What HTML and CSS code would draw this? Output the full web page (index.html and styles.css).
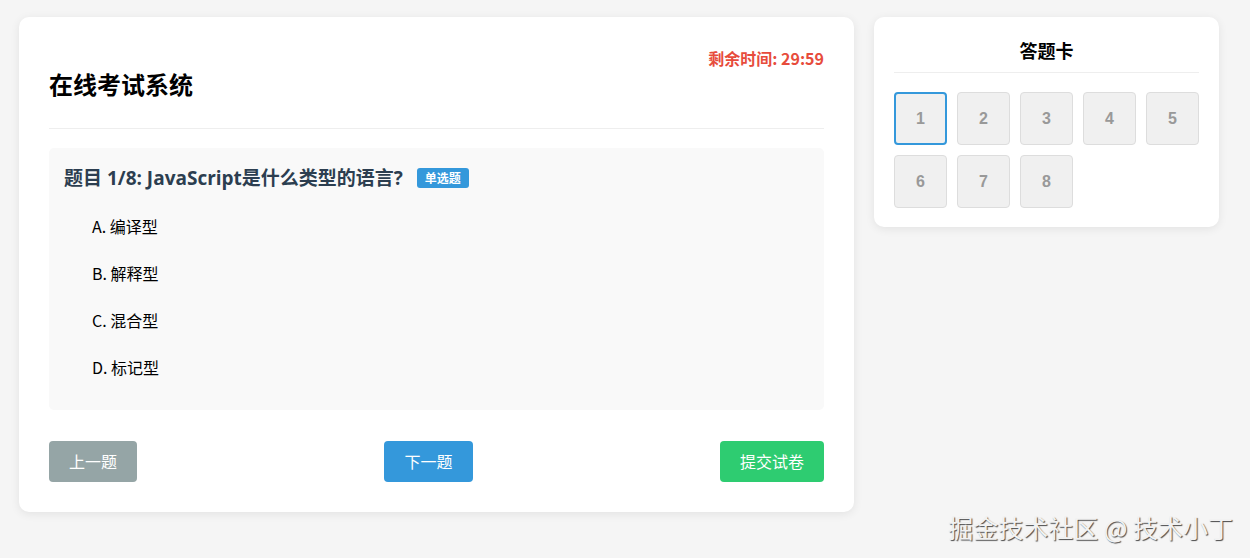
FILE: index.html
```html
<!DOCTYPE html>
<html lang="zh-CN">
<head>
<meta charset="UTF-8">
<meta name="viewport" content="width=device-width, initial-scale=1.0">
<title>在线考试系统</title>
<link rel="stylesheet" href="styles.css">
</head>
<body>
    <div class="wrapper">
        <div class="exam">
            <div class="exam-header">
                <h1>在线考试系统</h1>
                <div class="timer">剩余时间: 29:59</div>
            </div>

            <div class="question">
                <h3 class="question-title">题目 1/8: JavaScript是什么类型的语言? <span class="badge">单选题</span></h3>
                <ul class="options">
                    <li>A. 编译型</li>
                    <li>B. 解释型</li>
                    <li>C. 混合型</li>
                    <li>D. 标记型</li>
                </ul>
            </div>

            <div class="actions">
                <button class="btn btn-prev">上一题</button>
                <button class="btn btn-next">下一题</button>
                <button class="btn btn-submit">提交试卷</button>
            </div>
        </div>

        <div class="card">
            <h3 class="card-title">答题卡</h3>
            <div class="card-grid">
                <div class="card-item current">1</div>
                <div class="card-item">2</div>
                <div class="card-item">3</div>
                <div class="card-item">4</div>
                <div class="card-item">5</div>
                <div class="card-item">6</div>
                <div class="card-item">7</div>
                <div class="card-item">8</div>
            </div>
        </div>
    </div>

    <div class="watermark">掘金技术社区 @ 技术小丁</div>
</body>
</html>
```

FILE: styles.css
```css
body {
    font-family: "Liberation Sans", Arial, "Noto Sans CJK SC", sans-serif;
    background-color: #f5f5f5;
    margin: 0;
    padding: 17px 19px;
}

.wrapper {
    display: flex;
    align-items: flex-start;
    gap: 20px;
    width: 1200px;
}

.exam {
    width: 835px;
    box-sizing: border-box;
    background-color: #fff;
    padding: 30px;
    border-radius: 10px;
    box-shadow: 0 2px 10px rgba(0, 0, 0, 0.08);
}

.exam-header {
    display: flex;
    justify-content: space-between;
    align-items: flex-start;
    padding-bottom: 15px;
    border-bottom: 1px solid #eee;
    margin-bottom: 19px;
}

.exam-header h1 {
    font-family: "Noto Sans CJK SC", sans-serif;
    font-size: 24px;
    line-height: 32px;
    margin: 21px 0 13px;
    color: #000;
}

.timer {
    font-family: "Noto Sans CJK SC", sans-serif;
    font-size: 16px;
    line-height: 22px;
    font-weight: bold;
    color: #e74c3c;
}

.question {
    background-color: #f9f9f9;
    padding: 17px 15px 19px;
    border-radius: 5px;
}

.question-title {
    font-family: "Open Sans", "Noto Sans CJK SC", sans-serif;
    font-size: 19px;
    line-height: 26px;
    margin: 0 0 12px;
    color: #2c3e50;
}

.badge {
    display: inline-block;
    vertical-align: 2px;
    background-color: #3498db;
    color: #fff;
    font-family: "Noto Sans CJK SC", sans-serif;
    font-size: 12px;
    line-height: 20px;
    padding: 0 8px;
    border-radius: 3px;
    margin-left: 9px;
}

.options {
    list-style: none;
    margin: 0;
    padding: 0 0 0 28px;
}

.options li {
    font-family: "Noto Sans CJK SC", sans-serif;
    font-size: 16px;
    line-height: 23px;
    padding: 12px 0;
    color: #000;
}

.actions {
    display: flex;
    justify-content: space-between;
    margin-top: 31px;
}

.btn {
    font-family: "Noto Sans CJK SC", sans-serif;
    font-size: 16px;
    line-height: 21px;
    padding: 10px 20px;
    border: none;
    border-radius: 4px;
    color: #fff;
    cursor: pointer;
}

.btn-prev {
    background-color: #95a5a6;
}

.btn-next {
    background-color: #3498db;
}

.btn-submit {
    background-color: #2ecc71;
}

.card {
    width: 345px;
    box-sizing: border-box;
    background-color: #fff;
    padding: 20px 20px 19px;
    border-radius: 10px;
    box-shadow: 0 2px 10px rgba(0, 0, 0, 0.08);
}

.card-title {
    font-family: "Noto Sans CJK SC", sans-serif;
    font-size: 18px;
    line-height: 26px;
    text-align: center;
    margin: 0;
    padding-bottom: 9px;
    border-bottom: 1px solid #eee;
    color: #000;
}

.card-grid {
    display: grid;
    grid-template-columns: repeat(5, 53px);
    grid-auto-rows: 53px;
    gap: 10px;
    margin-top: 19px;
}

.card-item {
    display: flex;
    align-items: center;
    justify-content: center;
    background-color: #f0f0f0;
    border: 1px solid #ddd;
    border-radius: 4px;
    color: #999;
    font-weight: bold;
    font-size: 16px;
    box-sizing: border-box;
}

.card-item.current {
    border: 2px solid #3498db;
}

.watermark {
    position: absolute;
    right: 17px;
    bottom: 16px;
    font-family: "Noto Sans CJK SC", sans-serif;
    font-size: 25px;
    line-height: 30px;
    color: #f2f2f2;
    text-shadow: 1px 1px 1px rgba(0, 0, 0, 0.7);
}
```
